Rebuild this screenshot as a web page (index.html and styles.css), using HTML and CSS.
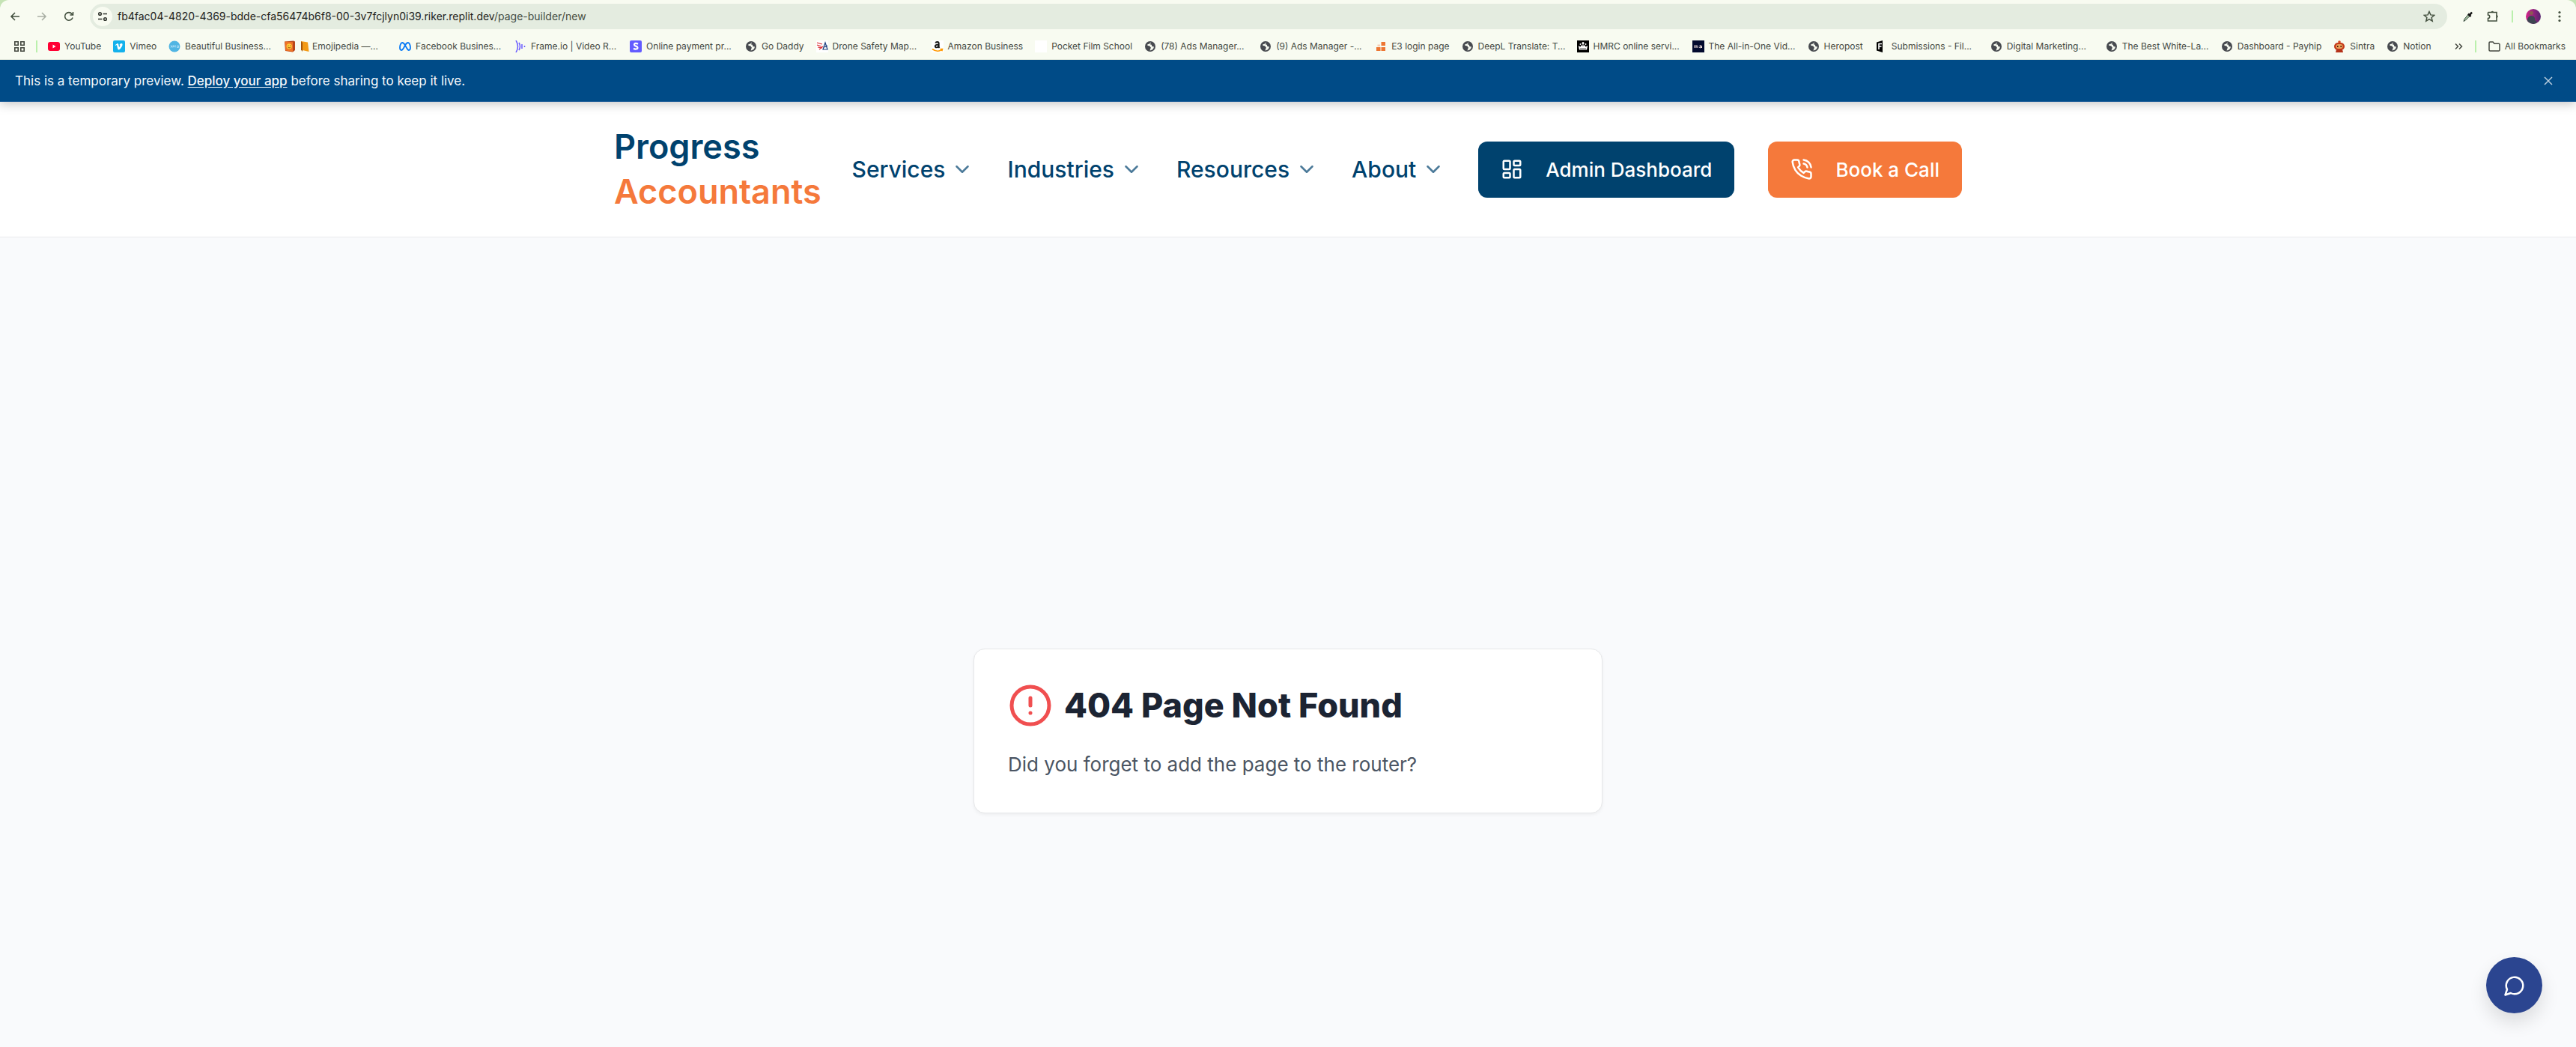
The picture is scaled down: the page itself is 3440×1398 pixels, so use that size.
FILE: index.html
```html
<!DOCTYPE html>
<html lang="en">
<head>
<meta charset="utf-8">
<title>404 Page Not Found</title>
<link rel="stylesheet" href="styles.css">
</head>
<body>
<svg class="sprite" aria-hidden="true">
  <symbol id="globe" viewBox="0 0 16 16"><circle cx="8" cy="8" r="7" fill="#474a4f"/><path d="M8.600 2.600c-1 .6-.4 1.500-1.600 2-1.200.4-2.600.2-2.800 1.400 0 1.200 1.800 1 2.800 1.300 1.200.4.600 1.700 1.700 2 .5.900-.4 1.300-.5 2.100 0 .9-.6 1.300-1 1.900 3.400.2 5.600-2.200 5.700-5-.8-.4-1.900.2-2.500-.5-.6-.8 0-1.600-.8-2.100-.6-.3-1.200.1-1.500-.4-.4-.8 1.200-1.200.5-2.700z" fill="#f8fbf1"/></symbol>
  <symbol id="chevron" viewBox="0 0 24 24"><path d="m6 9 6 6 6-6" fill="none" stroke="currentColor" stroke-width="2" stroke-linecap="round" stroke-linejoin="round"/></symbol>
</svg>
<div class="window">
  <div class="toolbar">
    <button class="tool" aria-label="Back"><svg viewBox="0 0 16 16"><path d="M14 8H3M8 3 3 8l5 5"/></svg></button>
    <button class="tool faded" aria-label="Forward"><svg viewBox="0 0 16 16"><path d="M2 8h11M8 3l5 5-5 5"/></svg></button>
    <button class="tool" aria-label="Reload"><svg viewBox="0 0 16 16"><path d="M13 9.500A5.300 5.300 0 1 1 12 4.500l1.300 1.300M13.500 2v4h-4"/></svg></button>
    <div class="omnibox">
      <button class="site" aria-label="Site information"><svg viewBox="0 0 16 16"><circle cx="4.500" cy="4.500" r="1.800"/><path d="M8.500 4.500H14M2 11.500h5.500"/><circle cx="11.500" cy="11.500" r="1.800"/></svg></button>
      <div class="url" role="textbox" aria-label="Address">fb4fac04-4820-4369-bdde-cfa56474b6f8-00-3v7fcjlyn0i39.riker.replit.dev<span>/page-builder/new</span></div>
      <button class="tool" aria-label="Bookmark this page"><svg viewBox="0 0 16 16"><path d="m8 1.500 1.900 4.400 4.800.4-3.600 3.100 1.100 4.700L8 11.600l-4.200 2.500 1.100-4.700L1.300 6.300l4.800-.4z"/></svg></button>
    </div>
    <div class="actions">
      <button class="tool" aria-label="Colour picker"><svg viewBox="0 0 16 16"><path d="m2 14.500 1-3 5-6 2 2-5.500 5.500z" fill="#a9c7a5" stroke="#33453a" stroke-width="1"/><path d="m8 4.500 3.500 3.500M10 6l3-3.500" stroke="#111" stroke-width="2.500"/></svg></button>
      <button class="tool" aria-label="Extensions"><svg viewBox="0 0 16 16"><path d="M1.500 2.500h11.500v4M13 9.500v4.500H1.500v-3.500c3 0 3-4.500 0-4.500V2.500"/><path d="M5.500 2.500a1.800 1.800 0 0 1 3.600 0zM13 6.200a1.800 1.800 0 0 1 0 3.600z" fill="currentColor" stroke="none"/><path d="M13 6v4"/></svg></button>
      <i class="rule"></i>
      <button class="avatar" aria-label="Profile"><svg viewBox="0 0 20 20"><defs><linearGradient id="sky"><stop stop-color="#d4268c"/><stop offset="1" stop-color="#55236f"/></linearGradient><clipPath id="disc"><circle cx="10" cy="10" r="10"/></clipPath></defs><g clip-path="url(#disc)"><path d="M0 0h20v20H0z" fill="url(#sky)"/><path d="M2 20c-1-6 1-11 5-11s6 3 5 6l3 2-2 3z" fill="#3d4552"/><circle cx="7.500" cy="5.500" r="2.400" fill="#8b5b50"/></g></svg></button>
      <button class="tool" aria-label="Menu"><svg viewBox="0 0 16 16"><g fill="currentColor" stroke="none"><circle cx="8" cy="2.500" r="1.600"/><circle cx="8" cy="8" r="1.600"/><circle cx="8" cy="13.500" r="1.600"/></g></svg></button>
    </div>
  </div>
  <nav class="bookmarks" aria-label="Bookmarks">
    <button class="apps" aria-label="Apps"><svg viewBox="0 0 16 16"><path d="M1.800 1.800h4.400v4.400H1.800zM9.800 1.800h4.400v4.400H9.800zM1.800 9.800h4.400v4.400H1.800zM9.800 9.800h4.400v4.400H9.800z"/></svg></button>
    <i class="rule"></i>
    <div class="links">
      <a href="#"><svg viewBox="0 0 16 16"><rect y="2" width="16" height="12" rx="3" fill="#f03"/><path d="m6.500 5.500 4 2.500-4 2.500z" fill="#fff"/></svg><span>YouTube</span></a>
      <a href="#"><svg viewBox="0 0 16 16"><rect width="16" height="16" rx="2" fill="#13b1ec"/><path d="M3 6 5.800 4c1.800-.8 1.600 3.500 2.400 5 1-1 2-3 .3-2.600.6-3 4.700-3.200 4-.4-.4 2.200-3.200 6.500-4.900 6.500C5.600 12.500 5.600 6 4.700 6.100L3.500 7z" fill="#fff"/></svg><span>Vimeo</span></a>
      <a href="#" class="long"><svg viewBox="0 0 16 16"><circle cx="8" cy="8" r="7.500" fill="#50b5e3"/><path d="m3 6.500 2 3m0-3-2 3M6 8h2M6 9.400V7h2v1M9 9.500V7h1M11.500 7h2v2.500h-2z" fill="none" stroke="#c7eafa" stroke-width=".7"/></svg><span>Beautiful Business...</span></a>
      <a href="#" class="long"><svg viewBox="0 0 16 16"><path d="M1 1.500 13 .5l2 1V13l-3 2.500L2 14z" fill="#b9471b"/><path d="m1.500 1.500 10.500.8V15L2.500 13.500z" fill="#ef7427"/><circle cx="7.200" cy="7.800" r="3.600" fill="#ffce3a"/><path d="M6 6.400v.8M8.600 6.400v.8M5.300 8.700c1 1.500 3 1.500 4 0" stroke="#8c3b0b" fill="none"/></svg><span class="pair"><svg viewBox="0 0 12 16"><path d="M1 1 10 2.500 11.500 15 3 13z" fill="#f39a16"/><path d="M1 1v11.500L3 15V3z" fill="#a75409"/></svg>Emojipedia —...</span></a>
      <a href="#" class="long"><svg viewBox="0 0 16 16"><path d="M8 6.500C6.500 3.500 5 3 4 3 2.300 3 1 6.500 1 9.500S2 13 3 13c2 0 3-3 5-6.500C9.500 3.500 11 3 12 3c1.700 0 3 3.500 3 6.500S14 13 13 13c-2 0-3-3.500-5-6.500z" fill="none" stroke="#0879f5" stroke-width="1.800"/></svg><span>Facebook Busines...</span></a>
      <a href="#" class="long"><svg viewBox="0 0 16 16"><path d="M2 0q5 8 0 16M6 3q3 5 0 10M10 5v6M13.500 7v2" fill="none" stroke="#6a5cff" stroke-width="1.500"/></svg><span>Frame.io | Video R...</span></a>
      <a href="#" class="long"><svg viewBox="0 0 16 16"><rect width="16" height="16" rx="2" fill="#635bff"/><path d="M11 4.700C9 3.500 6 3.600 6 5.700c0 2.200 4.500 1.700 4.500 4 0 2-3.300 2.400-5.500 1.100" fill="none" stroke="#fff" stroke-width="2.200"/></svg><span>Online payment pr...</span></a>
      <a href="#"><svg><use href="#globe"/></svg><span>Go Daddy</span></a>
      <a href="#" class="long"><svg viewBox="0 0 16 16"><path d="M0 0h16v16H0z" fill="#fff"/><path d="m1 3 7 2M1 6l6 2M2 9l6 1M4 12l5-4" stroke="#d9252c" stroke-width="1.200"/><path d="m9 12 3-9 3 9zM11 9l4-2" fill="none" stroke="#173c7c" stroke-width="1.200"/></svg><span>Drone Safety Map...</span></a>
      <a href="#"><svg viewBox="0 0 16 16"><path d="M0 0h16v16H0z" fill="#fff"/><path d="M5.300 3.500C6 1.500 9.700 1.500 9.700 4v5l.9.900M9.700 5.500C3 5.500 4.500 9.500 6.500 9.400 9 9.200 9.700 7.500 9.700 5.500" fill="none" stroke="#151515" stroke-width="1.900"/><path d="M1 11.500q7 5 12.500.8M11.500 11.500l3 0-.7 2.700" fill="none" stroke="#f90" stroke-width="1.600"/></svg><span>Amazon Business</span></a>
      <a href="#"><svg viewBox="0 0 16 16"><path d="M0 0h16v16H0z" fill="#fff"/></svg><span>Pocket Film School</span></a>
      <a href="#" class="long"><svg><use href="#globe"/></svg><span>(78) Ads Manager...</span></a>
      <a href="#" class="long"><svg><use href="#globe"/></svg><span>(9) Ads Manager -...</span></a>
      <a href="#"><svg viewBox="0 0 16 16"><path d="M8.500 2H14v5H8.500zM2 9h5.500v5H2zM8.500 9H14v5H8.500z" fill="#ed7633"/><path d="M3.500 5.500H7V8H3.500z" fill="#f7cdb3"/></svg><span>E3 login page</span></a>
      <a href="#" class="long"><svg><use href="#globe"/></svg><span>DeepL Translate: T...</span></a>
      <a href="#" class="long"><svg viewBox="0 0 16 16"><path d="M0 0h16v16H0z"/><path d="M3 12.500h10L14.200 7l-2.700 1.500L10 6 8 8 6 6 4.500 8.500 1.800 7z" fill="#fff"/><g fill="#fff"><circle cx="8" cy="3.500" r="1.500"/><circle cx="4.500" cy="5" r="1"/><circle cx="11.500" cy="5" r="1"/></g><path d="M8 4v4" stroke="#fff"/><path d="M4 11h8" stroke="#000" stroke-width=".7"/></svg><span>HMRC online servi...</span></a>
      <a href="#" class="long"><svg viewBox="0 0 16 16"><path d="M0 0h16v16H0z" fill="#020a2e"/><path d="M3 10V6.500M3 7.500q1.500-1.500 2 0V10M5 7.500q1.500-1.500 2 0V10M9.500 7q3-1 3 1v2M12.500 8.300c-4-.3-3.500 2.200-1.500 1.500l1.500-1" fill="none" stroke="#f1dfdc"/></svg><span>The All-in-One Vid...</span></a>
      <a href="#"><svg><use href="#globe"/></svg><span>Heropost</span></a>
      <a href="#" class="long"><svg viewBox="0 0 16 16"><path d="M2 2.500 10 0v16l-8-2.500z"/><path d="M5 12V4.500h4M5 8h3.500" stroke="#fff" stroke-width="1.600" fill="none"/></svg><span>Submissions - Fil...</span></a>
      <a href="#" class="long"><svg><use href="#globe"/></svg><span>Digital Marketing...</span></a>
      <a href="#" class="long"><svg><use href="#globe"/></svg><span>The Best White-La...</span></a>
      <a href="#"><svg><use href="#globe"/></svg><span>Dashboard - Payhip</span></a>
      <a href="#"><svg viewBox="0 0 16 16"><circle cx="8" cy="2" r="1.800" fill="#d94b26"/><rect x="1" y="3" width="14" height="10" rx="5" fill="#c43a1b"/><path d="M4 12h8l1 4H3z" fill="#b5321a"/><rect x="3.500" y="5" width="9" height="6" rx="3" fill="#e9a25a"/><path d="M5.800 7v2M10.200 7v2" stroke="#4a160c" stroke-width="1.500"/></svg><span>Sintra</span></a>
      <a href="#"><svg><use href="#globe"/></svg><span>Notion</span></a>
    </div>
    <div class="rest">
      <button class="more" aria-label="More bookmarks"><svg viewBox="0 0 12 12"><path d="m2 2.500 3.500 3.500L2 9.500M7 2.500l3.500 3.500L7 9.500"/></svg></button>
      <i class="rule"></i>
      <a href="#"><svg viewBox="0 0 16 16"><path d="M1 3.200C1 2.500 1.500 2 2.200 2H6l2 2.300h5.800c.7 0 1.200.5 1.200 1.200v7.300c0 .7-.5 1.200-1.200 1.200H2.200C1.500 14 1 13.500 1 12.800z" fill="none" stroke="#43473f" stroke-width="1.500"/></svg><span>All Bookmarks</span></a>
    </div>
  </nav>
  <div class="page">
    <div class="banner">
      <p>This is a temporary preview. <a href="#">Deploy your app</a> before sharing to keep it live.</p>
      <button aria-label="Dismiss"><svg viewBox="0 0 12 12"><path d="m1 1 10 10M11 1 1 11"/></svg></button>
    </div>
    <header class="header">
      <div class="bar">
        <a class="logo" href="#"><span>Progress</span> <b>Accountants</b></a>
        <nav class="menu" aria-label="Main">
          <button>Services<svg><use href="#chevron"/></svg></button>
          <button>Industries<svg><use href="#chevron"/></svg></button>
          <button>Resources<svg><use href="#chevron"/></svg></button>
          <button>About<svg><use href="#chevron"/></svg></button>
          <a class="cta admin" href="#"><svg viewBox="0 0 24 24"><rect width="7" height="9" x="3" y="3" rx="1"/><rect width="7" height="5" x="14" y="3" rx="1"/><rect width="7" height="9" x="14" y="12" rx="1"/><rect width="7" height="5" x="3" y="16" rx="1"/></svg>Admin Dashboard</a>
          <a class="cta call" href="#"><svg viewBox="0 0 24 24"><path d="M22 16.920v3a2 2 0 0 1-2.180 2 19.790 19.790 0 0 1-8.630-3.070 19.500 19.500 0 0 1-6-6 19.790 19.790 0 0 1-3.070-8.670A2 2 0 0 1 4.110 2h3a2 2 0 0 1 2 1.720 12.840 12.840 0 0 0 .7 2.810 2 2 0 0 1-.45 2.110L8.090 9.910a16 16 0 0 0 6 6l1.270-1.270a2 2 0 0 1 2.110-.45 12.840 12.840 0 0 0 2.810.7A2 2 0 0 1 22 16.920z"/><path d="M14.050 2a9 9 0 0 1 8 7.940M14.050 6A5 5 0 0 1 18 10"/></svg>Book a Call</a>
        </nav>
      </div>
    </header>
    <main class="main">
      <section class="card">
        <div class="heading">
          <svg viewBox="0 0 24 24"><circle cx="12" cy="12" r="10"/><path d="M12 8v4M12 16h.01"/></svg>
          <h1>404 Page Not Found</h1>
        </div>
        <p>Did you forget to add the page to the router?</p>
      </section>
    </main>
  </div>
  <button class="chat" aria-label="Open chat"><svg viewBox="0 0 24 24"><path d="M7.900 20A9 9 0 1 0 4 16.100L2 22Z"/></svg></button>
</div>
</body>
</html>
```
FILE: styles.css
```css
* { box-sizing: border-box; }
body { margin: 0; font-family: Inter, sans-serif; color: #1c2433; background: #c5e3b5; }
button { padding: 0; border: 0; background: none; color: inherit; font: inherit; cursor: pointer; }
a { color: inherit; text-decoration: none; }
h1, p { margin: 0; }
svg { display: block; flex: none; }
.sprite { position: absolute; width: 0; height: 0; }

.window { display: flex; flex-direction: column; height: 100vh; overflow: hidden; background: #f8fbf1; border-radius: 12px 12px 0 0; }

.toolbar { display: flex; align-items: center; gap: 20px; padding: 5px 14px 5px 12px; color: #43503f; }
.tool svg { width: 16px; height: 16px; fill: none; stroke: currentColor; stroke-width: 1.6; }
.faded { color: #a9afa4; }
.omnibox { display: flex; align-items: center; flex: 1; height: 34px; padding: 0 16px 0 4px; border-radius: 17px; background: #e4ece0; }
.omnibox .tool svg { stroke-width: 1.5; }
.site { display: grid; place-items: center; width: 26px; height: 26px; border-radius: 50%; background: #f8fbf1; color: #2f332d; }
.site svg { width: 16px; height: 16px; fill: none; stroke: currentColor; stroke-width: 1.5; }
.url { flex: 1; padding-left: 7px; font-size: 14px; line-height: 20px; color: #1d211b; }
.url span { color: #454c42; }
.actions { display: flex; align-items: center; gap: 17px; }
.avatar svg { width: 20px; height: 20px; }
.rule { width: 2px; height: 16px; background: #baf0ac; }

.bookmarks { display: flex; align-items: center; gap: 14px; height: 36px; padding: 0 14px 0 18px; border-bottom: 1px solid #dfe5da; font-size: 12px; line-height: 16px; color: #43473f; white-space: nowrap; }
.links { display: flex; gap: 16px; }
.bookmarks a { display: flex; align-items: center; gap: 6px; }
.bookmarks svg { width: 16px; height: 16px; }
.bookmarks .long > span { width: 116px; }
.bookmarks .pair { display: flex; gap: 4px; }
.bookmarks .pair svg { width: 12px; }
.apps svg { fill: none; stroke: currentColor; stroke-width: 1.600; }
.rest { display: flex; align-items: center; gap: 16px; margin-left: auto; }
.bookmarks .more svg { width: 12px; height: 12px; fill: none; stroke: currentColor; stroke-width: 1.500; }

.page { flex: 1; min-height: 0; overflow: hidden; background: #f9fafc; }
.banner { position: relative; display: flex; align-items: center; justify-content: space-between; height: 56px; padding: 0 31px 0 20px; border-bottom: 1px solid #1c5c97; background: #004b87; color: #f5f9fc; font-size: 17px; line-height: 24px; box-shadow: 0 2px 14px rgba(0, 0, 0, .25); }
.banner a { font-weight: 500; text-decoration: underline; text-underline-offset: 2px; }
.banner svg { width: 12px; height: 12px; fill: none; stroke: #b6cbdc; stroke-width: 1.500; }

.header { padding: 30px; border-bottom: 1px solid #e9ebed; background: #fff; }
.bar { display: flex; align-items: center; justify-content: space-between; max-width: 1800px; margin: 0 auto; }
.logo { display: flex; flex-direction: column; color: #00426e; font-size: 45px; line-height: 60px; font-weight: 600; }
.logo b { color: #f5793b; font-weight: 600; }
.menu { display: flex; align-items: center; gap: 45px; }
.menu button { display: flex; align-items: center; gap: 8px; color: #00426e; font-size: 30px; line-height: 40px; font-weight: 500; }
.menu svg { width: 30px; height: 30px; }
.menu button svg { opacity: .7; }
.cta { display: flex; align-items: center; gap: 30px; height: 75px; padding: 0 30px; border-radius: 12px; color: #fff; font-size: 26px; font-weight: 500; white-space: nowrap; }
.cta svg, .chat svg, .heading svg { fill: none; stroke: currentColor; stroke-width: 2; stroke-linecap: round; stroke-linejoin: round; }
.admin { background: #00426e; }
.call { background: #f5793b; }

.main { display: grid; place-items: center; min-height: calc(100vh - 80px); }
.card { width: 840px; max-width: 100%; padding: 45px; border: 1px solid #e6e7e9; border-radius: 15px; background: #fff; box-shadow: 0 2px 4px rgba(0, 0, 0, .05); }
.heading { display: flex; align-items: center; gap: 15px; margin-bottom: 30px; }
.heading svg { width: 60px; height: 60px; color: #f04f50; }
.heading h1 { font-size: 45px; line-height: 60px; font-weight: 800; }
.card p { color: #4b5563; font-size: 26px; line-height: 38px; }

.chat { position: fixed; right: 45px; bottom: 45px; display: grid; place-items: center; width: 75px; height: 75px; border-radius: 50%; background: #2b4590; color: #fff; box-shadow: 0 12px 24px rgba(0, 0, 0, .12); }
.chat svg { width: 30px; height: 30px; }
```
